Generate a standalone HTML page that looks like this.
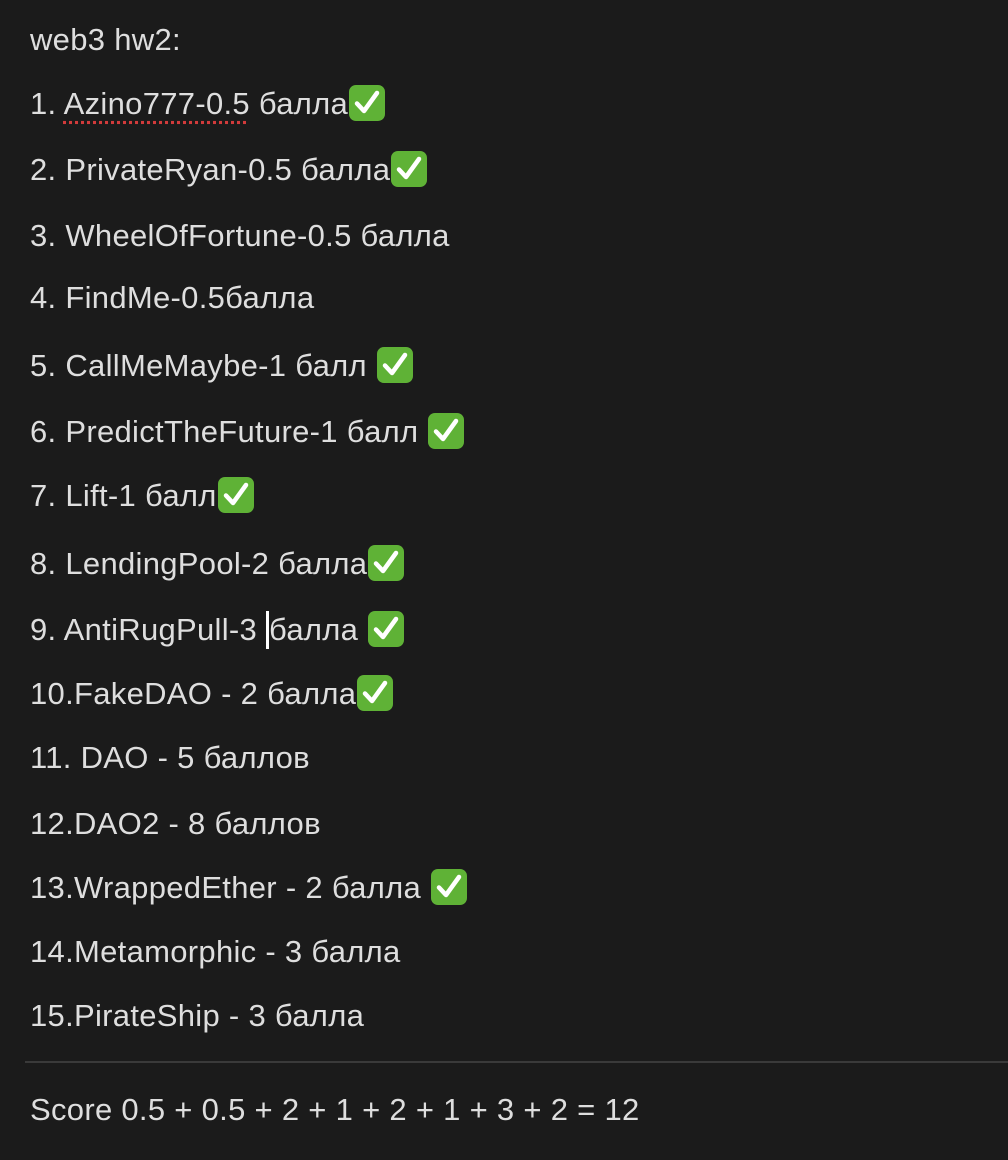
<!DOCTYPE html>
<html><head><meta charset="utf-8"><style>
html,body{margin:0;padding:0;background:#1b1b1b;width:1008px;height:1160px;overflow:hidden}
.l{position:absolute;left:30px;height:40px;line-height:40px;font-family:"Liberation Sans",sans-serif;font-size:31px;color:#dedede;white-space:nowrap;letter-spacing:0.3px}
.c{display:inline-block;width:38px;height:38px;vertical-align:middle;margin-top:-6px}
.sq{text-decoration:underline dotted #d23b3b;text-underline-offset:7px}
hr{position:absolute;left:25px;top:1061px;width:983px;margin:0;border:0;border-top:2px solid #3a3a3a}
.cur{display:inline-block;width:3px;height:38px;background:#fff;vertical-align:middle;margin:-4px 0 0 0}
</style></head><body>
<svg width="0" height="0" style="position:absolute"><defs><symbol id="ck" viewBox="0 0 38 38"><rect x="1" y="1" width="36" height="36" rx="7" fill="#5fb236"/><path d="M9 19.5 L16 27 L29 9" fill="none" stroke="#fff" stroke-width="4.5" stroke-linecap="round" stroke-linejoin="round"/></symbol></defs></svg>
<div class="l" style="top:20px">web3 hw2:</div>
<div class="l" style="top:84px">1. <span class="sq">Azino777-0.5</span> балла<svg class="c"><use href="#ck"/></svg></div>
<div class="l" style="top:150px">2. PrivateRyan-0.5 балла<svg class="c"><use href="#ck"/></svg></div>
<div class="l" style="top:216px">3. WheelOfFortune-0.5 балла</div>
<div class="l" style="top:278px">4. FindMe-0.5балла</div>
<div class="l" style="top:346px">5. CallMeMaybe-1 балл <svg class="c"><use href="#ck"/></svg></div>
<div class="l" style="top:412px">6. PredictTheFuture-1 балл <svg class="c"><use href="#ck"/></svg></div>
<div class="l" style="top:476px">7. Lift-1 балл<svg class="c"><use href="#ck"/></svg></div>
<div class="l" style="top:544px">8. LendingPool-2 балла<svg class="c"><use href="#ck"/></svg></div>
<div class="l" style="top:610px">9. AntiRugPull-3 <span class="cur"></span>балла <svg class="c"><use href="#ck"/></svg></div>
<div class="l" style="top:674px">10.FakeDAO - 2 балла<svg class="c"><use href="#ck"/></svg></div>
<div class="l" style="top:738px">11. DAO - 5 баллов</div>
<div class="l" style="top:804px">12.DAO2 - 8 баллов</div>
<div class="l" style="top:868px">13.WrappedEther - 2 балла <svg class="c"><use href="#ck"/></svg></div>
<div class="l" style="top:932px">14.Metamorphic - 3 балла</div>
<div class="l" style="top:996px">15.PirateShip - 3 балла</div>
<hr>
<div class="l" style="top:1090px">Score 0.5 + 0.5 + 2 + 1 + 2 + 1 + 3 + 2 = 12</div>
</body></html>
